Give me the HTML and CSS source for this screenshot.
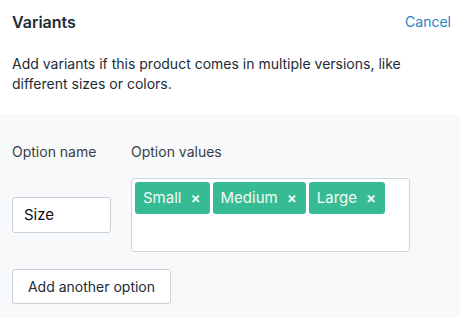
FILE: index.html
```html
<!DOCTYPE html>
<html>
<head>
<meta charset="utf-8">
<link rel="stylesheet" href="styles.css">
</head>
<body>
<div class="panel">
  <div class="header">
    <h2 class="title">Variants</h2>
    <a class="cancel" href="#">Cancel</a>
  </div>
  <p class="desc">Add variants if this product comes in multiple versions, like different sizes or colors.</p>
  <div class="options">
    <div class="option-grid">
      <div class="label">Option name</div>
      <div class="label">Option values</div>
      <div class="name-cell"><div class="input">Size</div></div>
      <div class="values">
        <span class="tag">Small<span class="x">×</span></span>
        <span class="tag">Medium<span class="x">×</span></span>
        <span class="tag">Large<span class="x">×</span></span>
      </div>
    </div>
    <button class="add-btn">Add another option</button>
  </div>
</div>
</body>
</html>
```
FILE: styles.css
```css
* { box-sizing: border-box; }
html, body { margin: 0; padding: 0; background: #fff; }
body {
  font-family: Inter, "Noto Sans", sans-serif;
  font-size: 14px;
  color: #212b36;
  width: 460px;
  height: 318px;
  overflow: hidden;
}
.header {
  display: flex;
  justify-content: space-between;
  align-items: center;
  padding: 12px 9px 0 12px;
  height: 32px;
}
.title {
  margin: 0;
  font-size: 16px;
  font-weight: 600;
  line-height: 20px;
}
.cancel {
  color: #2b7fc6;
  text-decoration: none;
  font-size: 14px;
  line-height: 20px;
}
.desc {
  margin: 0;
  padding: 22px 12px 20px 12px;
  line-height: 20px;
}
.options {
  background: #f8f9fb;
  padding: 28px 12px 20px 12px;
  height: 204px;
}
.option-grid {
  display: grid;
  grid-template-columns: 99px 279px;
  column-gap: 20px;
  row-gap: 16px;
  align-items: center;
}
.label {
  line-height: 20px;
  color: #393f45;
}
.input {
  background: #fff;
  border: 1px solid #c9cfd6;
  border-radius: 3px;
  height: 36px;
  padding: 0 11px;
  line-height: 34px;
  font-size: 15px;
  color: #111;
}
.values {
  background: #fff;
  border: 1px solid #cfd6dd;
  border-radius: 3px;
  height: 74px;
  padding: 3px;
  display: flex;
  align-items: flex-start;
  gap: 3px;
}
.tag {
  background: #37bb94;
  color: #f2fbf7;
  border-radius: 3px;
  height: 32px;
  line-height: 32px;
  padding: 0 9px 0 8px;
  font-size: 15px;
  display: inline-flex;
  align-items: center;
}
.x {
  margin-left: 9px;
  font-size: 15px;
  font-weight: 600;
}
.add-btn {
  margin-top: 17px;
  font-family: inherit;
  font-size: 14px;
  color: #212b36;
  background: #fff;
  border: 1px solid #c9cfd6;
  border-radius: 3px;
  height: 35px;
  width: 159px;
  padding: 0;
}
```
